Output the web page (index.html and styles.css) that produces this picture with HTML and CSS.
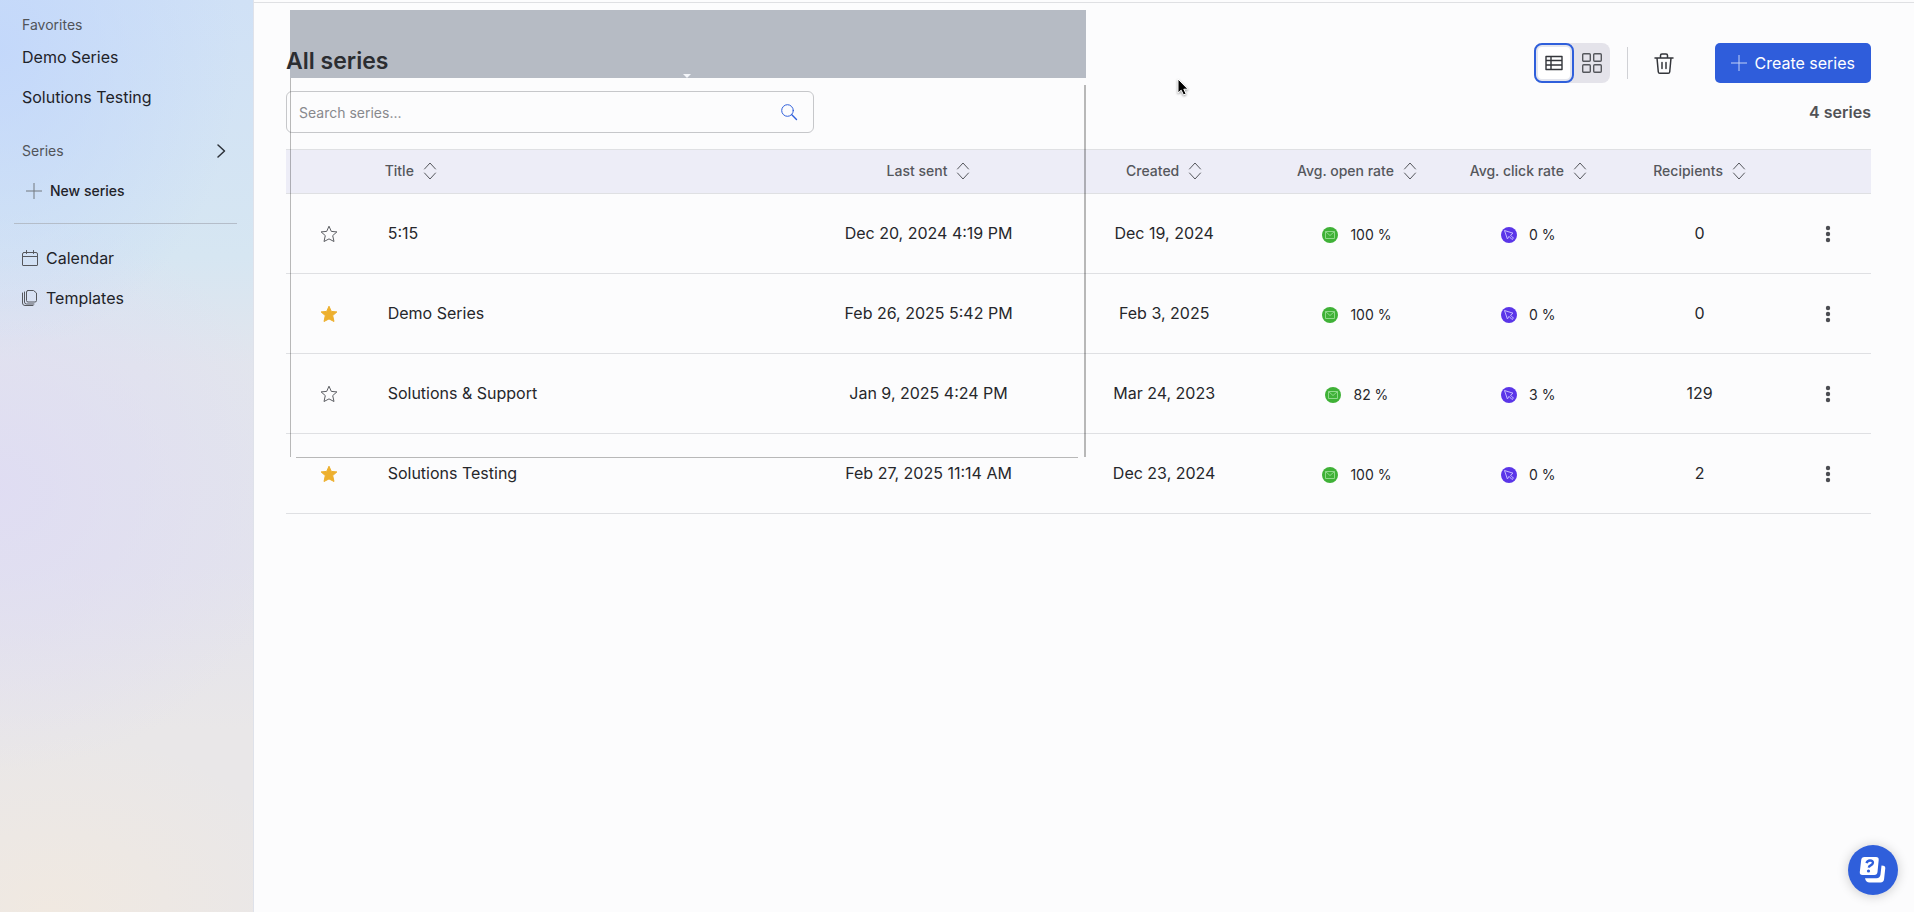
FILE: index.html
```
<!DOCTYPE html>
<html lang="en">
<head>
<meta charset="utf-8">
<title>All series</title>
<link rel="stylesheet" href="styles.css">
</head>
<body>
<svg class="sprite" aria-hidden="true">
  <symbol id="sort" viewBox="0 0 14 18"><path d="M1.500 7L7 1l5.500 6M1.500 11L7 17l5.500-6"/></symbol>
  <symbol id="star" viewBox="0 0 18 18"><path d="M9 1.200l2.300 5.200 5.600.5-4.200 3.700 1.300 5.900L9 13.900 4 16.500l1.300-5.900L1.100 6.900l5.600-.5z"/></symbol>
  <symbol id="mail" viewBox="0 0 16 16"><circle cx="8" cy="8" r="8" fill="#3fb137"/><path d="M3.500 4.500h9v7h-9zM3.500 4.500L8 8.500l4.500-4" fill="none" stroke="#8fd98a"/></symbol>
  <symbol id="click" viewBox="0 0 16 16"><circle cx="8" cy="8" r="8" fill="#5a35e8"/><path d="M3.500 3.500l8.500 2.700-2.500 2 3 3-1.500 1.300-3-3.200-1.600 2.700z" fill="none" stroke="#c6bbff" stroke-linejoin="round"/></symbol>
  <symbol id="dots" viewBox="0 0 6 18"><circle cx="3" cy="3" r="2.200"/><circle cx="3" cy="9" r="2.200"/><circle cx="3" cy="15" r="2.200"/></symbol>
  <symbol id="plus" viewBox="0 0 16 16"><path d="M8 0v16M0 8h16"/></symbol>
</svg>
<div class="app">
  <nav class="sidebar">
    <h2 class="side-title">Favorites</h2>
    <a class="side-link" href="#">Demo Series</a>
    <a class="side-link" href="#">Solutions Testing</a>
    <div class="side-head">
      <h2 class="side-title">Series</h2>
      <button class="icon-button" aria-label="Expand series"><svg class="line-icon" width="9" height="14" viewBox="0 0 9 14"><path d="M1 1l6.500 6L1 13" stroke-width="1.500"/></svg></button>
    </div>
    <a class="side-link side-new" href="#"><svg class="line-icon muted" width="16" height="16"><use href="#plus"/></svg>New series</a>
    <hr class="side-rule">
    <a class="side-link side-tool" href="#"><svg class="line-icon" width="16" height="16" viewBox="0 0 16 16"><path d="M2 2.500h12a1.500 1.500 0 0 1 1.500 1.500v11a.5.5 0 0 1-.5.500H1a.5.500 0 0 1-.5-.5V4A1.500 1.500 0 0 1 2 2.500zM.5 6.500h15M4.500.5v3M11.500.5v3"/></svg>Calendar</a>
    <a class="side-link side-tool" href="#"><svg class="line-icon" width="16" height="16" viewBox="0 0 16 16"><path d="M6 .500h5.500L14.500 3v7.500a1.500 1.500 0 0 1-1.500 1.500H6A1.500 1.500 0 0 1 4.500 10.500V2A1.500 1.500 0 0 1 6 .5zM2.500 2v10A2 2 0 0 0 4.500 14H12M.5 3v10a2.500 2.500 0 0 0 2.500 2.500h8"/></svg>Templates</a>
  </nav>
  <main class="main">
    <div class="frame" aria-hidden="true"><div class="frame-band"></div><div class="frame-body"><i class="edge-left"></i><i class="edge-right"></i><i class="edge-bottom"></i></div></div>
    <header class="toolbar">
      <h1 class="page-title">All series</h1>
      <div class="view-toggle">
        <button class="view-button active" aria-label="List view"><svg class="line-icon dark" width="18" height="16" viewBox="0 0 18 16"><path d="M1 1.500h16v13H1zM1 5.500h16M1 10h16M6 1.500v13" stroke-width="1.400"/></svg></button>
        <button class="view-button" aria-label="Grid view"><svg class="line-icon" width="20" height="20" viewBox="0 0 20 20"><g stroke-width="1.400"><rect x=".7" y=".7" width="7.600" height="7.600" rx="1"/><rect x="11.700" y=".7" width="7.600" height="7.600" rx="1"/><rect x=".7" y="11.700" width="7.600" height="7.600" rx="1"/><rect x="11.700" y="11.700" width="7.600" height="7.600" rx="1"/></g></svg></button>
      </div>
      <span class="separator"></span>
      <button class="icon-button trash" aria-label="Deleted series"><svg class="line-icon dark" width="20" height="21" viewBox="0 0 20 21"><path d="M1 5h18M3 5l1.300 14a1.500 1.500 0 0 0 1.500 1.300h8.400a1.500 1.500 0 0 0 1.500-1.300L17 5M6.500 5V2.500A1.500 1.500 0 0 1 8 1h4a1.500 1.500 0 0 1 1.500 1.500V5M8 9.500v6M12 9.500v6" stroke-width="1.500"/></svg></button>
      <button class="create"><svg class="line-icon light" width="16" height="16"><use href="#plus"/></svg>Create series</button>
    </header>
    <div class="filter">
      <label class="search">
        <input class="search-input" type="text" placeholder="Search series..." aria-label="Search series">
        <svg class="line-icon blue" width="16" height="16" viewBox="0 0 16 16"><circle cx="6.500" cy="6.500" r="5.800"/><path d="M10.800 10.800l4.700 4.700" stroke-width="1.400"/></svg>
      </label>
      <strong class="count">4 series</strong>
    </div>
    <table class="series">
      <colgroup><col class="w1"><col class="w5"><col class="w3"><col class="w25"><col class="w2"><col class="w2"><col class="w2"><col class="w1"></colgroup>
      <thead><tr>
        <th></th>
        <th class="name"><button class="sort">Title<svg class="line-icon" width="14" height="18"><use href="#sort"/></svg></button></th>
        <th><button class="sort">Last sent<svg class="line-icon" width="14" height="18"><use href="#sort"/></svg></button></th>
        <th><button class="sort">Created<svg class="line-icon" width="14" height="18"><use href="#sort"/></svg></button></th>
        <th><button class="sort">Avg. open rate<svg class="line-icon" width="14" height="18"><use href="#sort"/></svg></button></th>
        <th><button class="sort">Avg. click rate<svg class="line-icon" width="14" height="18"><use href="#sort"/></svg></button></th>
        <th><button class="sort">Recipients<svg class="line-icon" width="14" height="18"><use href="#sort"/></svg></button></th>
        <th></th>
      </tr></thead>
      <tbody>
        <tr>
          <td><button class="icon-button" aria-label="Add favorite"><svg class="star" width="18" height="18"><use href="#star"/></svg></button></td>
          <td class="name">5:15</td><td>Dec 20, 2024 4:19 PM</td><td>Dec 19, 2024</td>
          <td><span class="rate"><svg width="16" height="16"><use href="#mail"/></svg>100 %</span></td>
          <td><span class="rate"><svg width="16" height="16"><use href="#click"/></svg>0 %</span></td>
          <td>0</td><td><button class="icon-button" aria-label="More"><svg class="dots" width="6" height="18"><use href="#dots"/></svg></button></td>
        </tr>
        <tr>
          <td><button class="icon-button" aria-label="Remove favorite"><svg class="star on" width="18" height="18"><use href="#star"/></svg></button></td>
          <td class="name">Demo Series</td><td>Feb 26, 2025 5:42 PM</td><td>Feb 3, 2025</td>
          <td><span class="rate"><svg width="16" height="16"><use href="#mail"/></svg>100 %</span></td>
          <td><span class="rate"><svg width="16" height="16"><use href="#click"/></svg>0 %</span></td>
          <td>0</td><td><button class="icon-button" aria-label="More"><svg class="dots" width="6" height="18"><use href="#dots"/></svg></button></td>
        </tr>
        <tr>
          <td><button class="icon-button" aria-label="Add favorite"><svg class="star" width="18" height="18"><use href="#star"/></svg></button></td>
          <td class="name">Solutions &amp; Support</td><td>Jan 9, 2025 4:24 PM</td><td>Mar 24, 2023</td>
          <td><span class="rate"><svg width="16" height="16"><use href="#mail"/></svg>82 %</span></td>
          <td><span class="rate"><svg width="16" height="16"><use href="#click"/></svg>3 %</span></td>
          <td>129</td><td><button class="icon-button" aria-label="More"><svg class="dots" width="6" height="18"><use href="#dots"/></svg></button></td>
        </tr>
        <tr>
          <td><button class="icon-button" aria-label="Remove favorite"><svg class="star on" width="18" height="18"><use href="#star"/></svg></button></td>
          <td class="name">Solutions Testing</td><td>Feb 27, 2025 11:14 AM</td><td>Dec 23, 2024</td>
          <td><span class="rate"><svg width="16" height="16"><use href="#mail"/></svg>100 %</span></td>
          <td><span class="rate"><svg width="16" height="16"><use href="#click"/></svg>0 %</span></td>
          <td>2</td><td><button class="icon-button" aria-label="More"><svg class="dots" width="6" height="18"><use href="#dots"/></svg></button></td>
        </tr>
      </tbody>
    </table>
  </main>
</div>
<svg class="pointer" width="14" height="20" viewBox="0 0 14 20" aria-hidden="true"><path d="M1 1v14l3.200-2.800 2.300 4.800 2.600-1.200-2.300-4.600h4.200z" fill="#000" stroke="#fff"/></svg>
<button class="help" aria-label="Help"><svg width="26" height="26" viewBox="0 0 26 26"><path d="M21.500 8.500l2 .3q2 .3 1.800 2.300l-1.200 11q-.3 3.400-3.600 3.400H9.500q-3.500 0-4.500-4.300h11.500q3.500 0 4-3.700z" fill="#fff"/><path d="M4.500 0h11.500q3 0 2.700 3l-1.200 12q-.3 3-3.300 3H2.500q-3 0-2.700-3L1.200 3q.3-3 3.300-3z" fill="#fff"/><path d="M6.500 6.200q.8-2.700 3.500-2.700 3.200 0 2.900 2.400-.2 1.600-2.200 2.500-1.700.8-1.900 2.200" fill="none" stroke="#2f5fdb" stroke-width="2.400"/><circle cx="8.500" cy="14" r="1.600" fill="#2f5fdb"/></svg></button>
</body>
</html>
```
FILE: styles.css
```
* { box-sizing: border-box; }
body { margin: 0; background: #fcfcfd; color: #26272b; font: 16px/20px Inter, "Liberation Sans", sans-serif; }
button { font: inherit; color: inherit; border: 0; padding: 0; background: none; cursor: pointer; }
svg { display: block; flex: none; overflow: visible; }
.sprite { position: absolute; width: 0; height: 0; }
.app { display: flex; min-height: 100vh; }

.line-icon { fill: none; stroke: #55575c; stroke-linecap: round; stroke-linejoin: round; }
.line-icon.dark { stroke: #33353a; }
.line-icon.light { stroke: #c4d3f7; }
.line-icon.blue { stroke: #2f5fdb; }
.line-icon.muted { stroke: #73797f; }
.icon-button { display: inline-flex; vertical-align: middle; }

.sidebar {
  flex: none; width: 254px; padding: 15px 16px 0 14px; border-right: 1px solid #dfe2ea;
  background:
    radial-gradient(ellipse 240px 300px at 0 50px, rgba(194, 215, 251, .9), rgba(194, 215, 251, 0)),
    radial-gradient(ellipse 300px 280px at 0 490px, rgba(223, 220, 243, .9), rgba(223, 220, 243, 0)),
    radial-gradient(ellipse 260px 180px at 50px 100%, rgba(241, 233, 224, .9), rgba(241, 233, 224, 0)),
    linear-gradient(#d0e1f6, #d6e6f2 28%, #e2e5ed 40%, #e3e3ed 62%, #e9e7e8 80%);
}
.side-title { margin: 0 0 0 8px; font-size: 14px; font-weight: 400; color: #515459; }
.side-link { display: flex; align-items: center; height: 40px; padding-left: 8px; color: #1f2329; text-decoration: none; }
.side-title + .side-link { margin-top: 2px; }
.side-head { display: flex; align-items: center; justify-content: space-between; margin-top: 24px; padding-right: 11px; }
.side-head .line-icon { stroke: #2c3138; }
.side-new { margin-top: 10px; padding-left: 12px; gap: 8px; font-size: 14px; font-weight: 500; }
.side-rule { margin: 12px 0 14px; border: 0; height: 1px; background: #b4bdc9; }
.side-tool { gap: 8px; }

.main { flex: 1; position: relative; margin-top: 2px; padding: 40px 43px 0 32px; border-top: 1px solid #dfe0e3; }
.toolbar { display: flex; align-items: center; height: 40px; }
.page-title { position: relative; margin: 0 auto 4px 0; font-size: 23px; line-height: 28px; font-weight: 600; color: #2b2d31; }
.view-toggle { display: flex; border-radius: 8px; background: #e4e3ea; }
.view-button { display: flex; align-items: center; justify-content: center; width: 36px; height: 40px; }
.view-button.active { width: 40px; border: 2px solid #2f5fdb; border-radius: 8px; background: #fff; box-shadow: inset 0 0 0 2px #e4e6ee; }
.separator { width: 1px; height: 32px; margin: 0 26px 0 17px; background: #d0d1d5; }
.trash { margin-right: 41px; }
.create { display: flex; align-items: center; gap: 7px; height: 40px; padding: 0 16px; border-radius: 5px; background: #2f5ddb; color: #fff; }

.filter { display: flex; justify-content: space-between; margin-top: 8px; }
.search { display: flex; align-items: center; width: 33.300%; height: 42px; padding: 0 16px 0 12px; border: 1px solid #c6c7ca; border-radius: 6px; }
.search-input { flex: 1; min-width: 0; height: 24px; padding: 0; border: 0; outline: 0; background: none; font: 14px/20px Inter, "Liberation Sans", sans-serif; }
.search-input::placeholder { color: #88898d; opacity: 1; }
.count { margin-top: 11px; font-weight: 600; color: #515256; }

.series { width: 100%; margin-top: 16px; border-collapse: collapse; table-layout: fixed; }
.w1 { width: 5.400%; }
.w5 { width: 27%; }
.w3 { width: 16.200%; }
.w25 { width: 13.500%; }
.w2 { width: 10.800%; }
.series th, .series td { padding: 0 0 2px; text-align: center; border-bottom: 1px solid #dfe0e3; }
.series th { height: 44px; background: #ededf7; border-top: 1px solid #dfe0e3; font-size: 14px; font-weight: 500; color: #55575c; }
.series td { height: 80px; }
.series th.name { text-align: left; padding-left: 13px; }
.series td.name { text-align: left; padding-left: 16px; }
.sort { display: inline-flex; align-items: center; gap: 9px; vertical-align: middle; white-space: nowrap; }
.rate { display: inline-flex; align-items: center; gap: 12px; padding-top: 5px; vertical-align: middle; font-size: 14px; }
.star { fill: none; stroke: #5b5d62; stroke-linejoin: round; }
.star.on { fill: #edb02f; stroke: #edb02f; }
.dots { fill: #4b4d52; }

.frame { position: absolute; left: 36px; top: 7px; width: 796px; pointer-events: none; }
.frame-band { height: 68px; background: #b6bbc4; }
.frame-band::after { content: ""; position: absolute; left: 393px; top: 64px; border: 4px solid transparent; border-top-color: #f4f6fa; border-bottom: 0; }
.frame-body { position: relative; height: 380px; }
.edge-left, .edge-right, .edge-bottom { position: absolute; background: rgba(0, 0, 0, .27); }
.edge-left { left: 0; top: 0; bottom: 1px; width: 1px; }
.edge-right { right: 0; top: 7px; bottom: 1px; width: 2px; }
.edge-bottom { left: 6px; right: 8px; bottom: 0; height: 1px; }

.pointer { position: absolute; left: 1177px; top: 78px; filter: drop-shadow(0 1px 1px rgba(0, 0, 0, .4)); }
.help { position: fixed; right: 16px; bottom: 17px; display: flex; align-items: center; justify-content: center; width: 50px; height: 50px; border-radius: 50%; background: #2f5fdb; box-shadow: 0 1px 12px rgba(0, 0, 0, .2); }
```
